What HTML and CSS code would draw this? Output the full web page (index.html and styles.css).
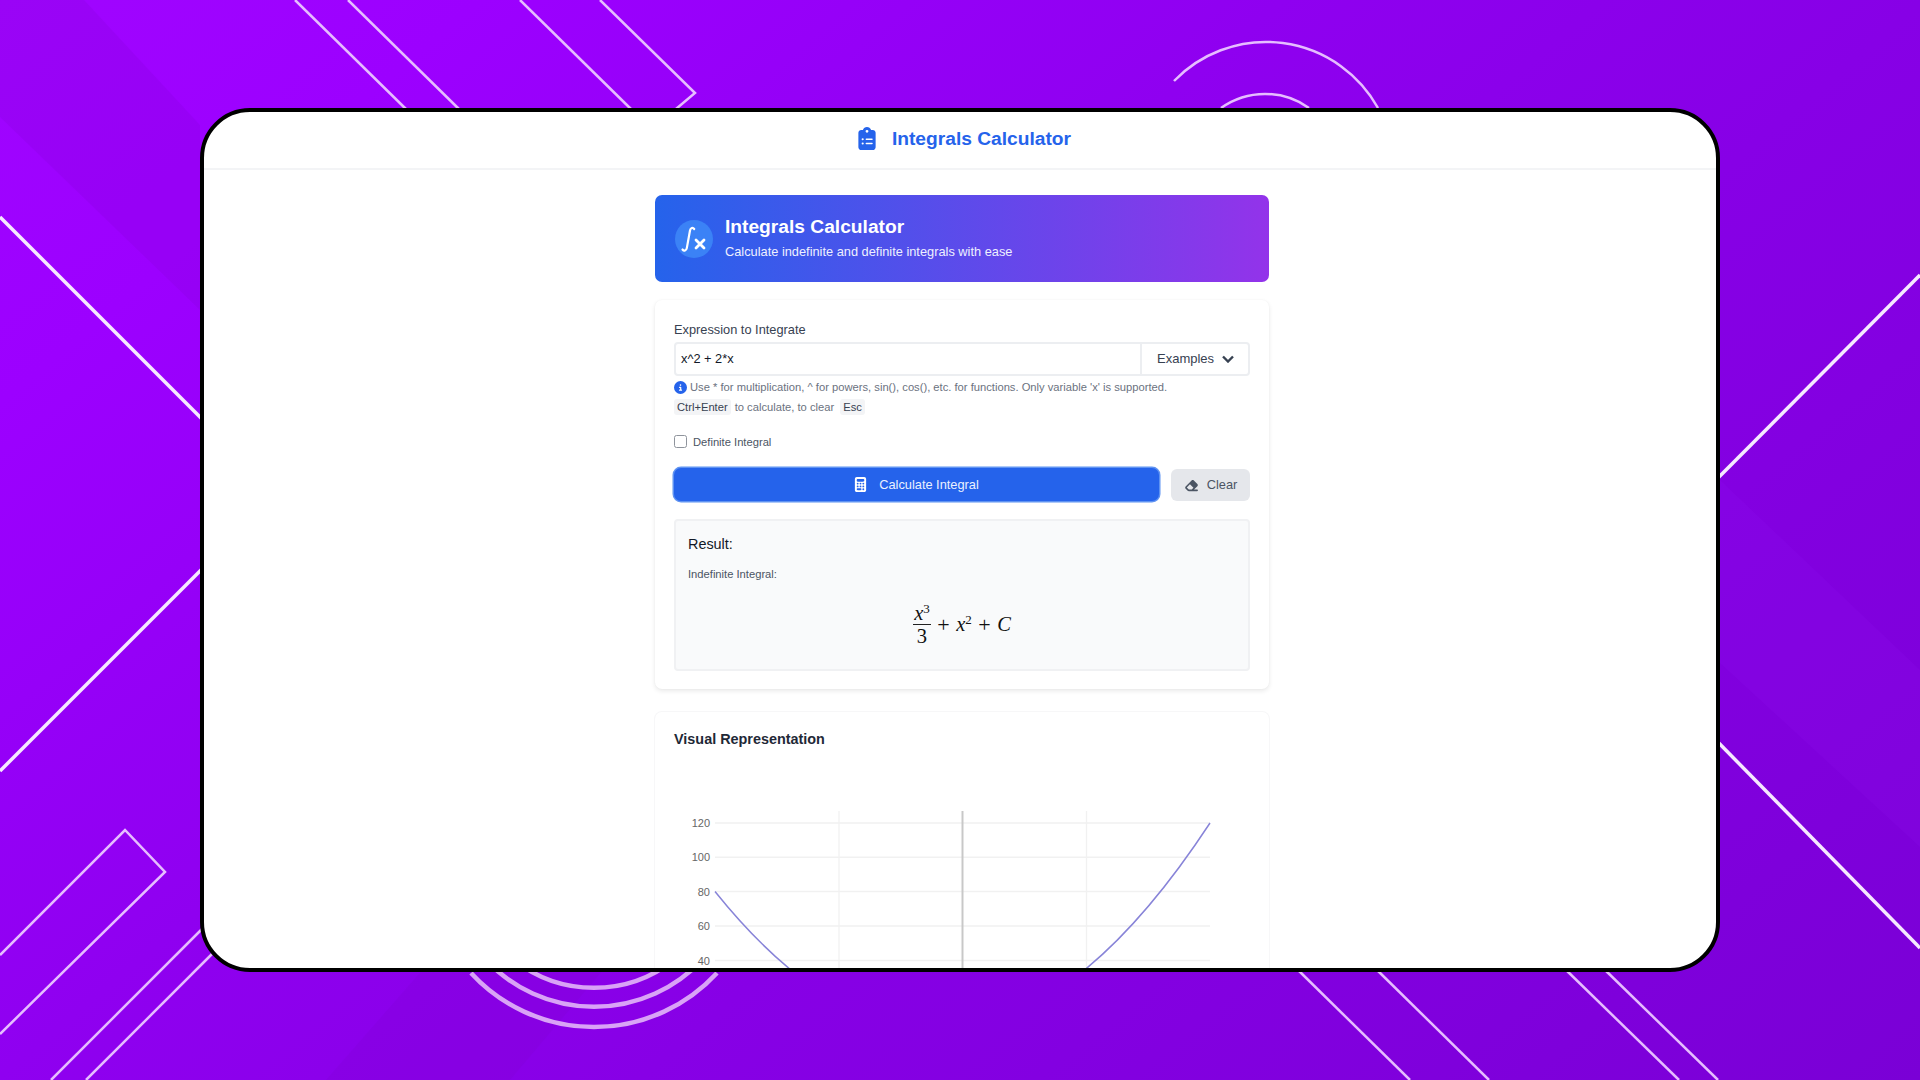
FILE: index.html
```html
<!DOCTYPE html>
<html lang="en">
<head>
<meta charset="utf-8">
<title>Integrals Calculator</title>
<link rel="stylesheet" href="styles.css">
</head>
<body>
<div class="stage">
  <svg class="backdrop" viewBox="0 0 1920 1080" aria-hidden="true">
    <g class="facets">
      <polygon class="dark" points="84,0 200,125 200,310 0,117 0,0"/>
      <polygon class="dark" points="326,1080 440,950 620,950 510,1080"/>
      <polygon class="light" points="1720,480 1920,670 1920,847 1720,663"/>
    </g>
    <g class="line-heavy">
      <line x1="0" y1="217" x2="210" y2="427"/>
      <line x1="0" y1="771" x2="210" y2="561"/>
      <line x1="1920" y1="275" x2="1710" y2="486"/>
      <line x1="1710" y1="734" x2="1920" y2="948"/>
    </g>
    <g class="line-thin">
      <line x1="295" y1="0" x2="410" y2="113"/>
      <line x1="348" y1="0" x2="463" y2="113"/>
      <line x1="520" y1="0" x2="635" y2="113"/>
      <polyline points="600,0 695,93 670,114"/>
      <polyline points="0,955 125,830 165,872 0,1034"/>
      <line x1="205" y1="926" x2="51" y2="1080"/>
      <line x1="220" y1="946" x2="86" y2="1080"/>
      <line x1="1295" y1="967" x2="1410" y2="1080"/>
      <line x1="1374" y1="967" x2="1489" y2="1080"/>
      <line x1="1563" y1="967" x2="1679" y2="1080"/>
      <line x1="1602" y1="967" x2="1718" y2="1080"/>
      <path d="M1174 81A128 128 0 0 1 1378 108"/>
      <path d="M1221 108A76 76 0 0 1 1309 108"/>
    </g>
    <g class="arcs">
      <path d="M471 973A167 167 0 0 0 717 973"/>
      <path d="M486 960A148 148 0 0 0 702 960"/>
      <path d="M514 960A129 129 0 0 0 674 960"/>
    </g>
  </svg>

  <div class="window">
    <header class="topbar">
      <svg class="logo" viewBox="0 0 384 512" aria-hidden="true"><path d="M192 0c-41.800 0-77.400 26.700-90.500 64H64C28.700 64 0 92.700 0 128V448c0 35.300 28.700 64 64 64H320c35.300 0 64-28.700 64-64V128c0-35.300-28.700-64-64-64H282.500C269.400 26.700 233.800 0 192 0zm0 64a32 32 0 1 1 0 64 32 32 0 1 1 0-64zM72 272a24 24 0 1 1 48 0 24 24 0 1 1 -48 0zm104-16H304c8.800 0 16 7.200 16 16s-7.200 16-16 16H176c-8.800 0-16-7.200-16-16s7.200-16 16-16zM72 368a24 24 0 1 1 48 0 24 24 0 1 1 -48 0zm88 0c0-8.800 7.200-16 16-16H304c8.800 0 16 7.200 16 16s-7.200 16-16 16H176c-8.800 0-16-7.200-16-16z"/></svg>
      <span class="brand">Integrals Calculator</span>
    </header>

    <main class="column">
      <section class="banner">
        <span class="banner-badge">
          <svg viewBox="0 0 38 38" aria-hidden="true">
            <path class="integral" d="M7.500 29.500c1.600 2 3.800 1.200 4.300-1.400L15 10.500c.5-2.700 2.800-3.400 4.200-1.500"/>
            <path class="times" d="M21 20l8 8M29 20l-8 8"/>
          </svg>
        </span>
        <div class="banner-text">
          <h1 class="banner-title">Integrals Calculator</h1>
          <p class="banner-sub">Calculate indefinite and definite integrals with ease</p>
        </div>
      </section>

      <section class="card calc-card">
        <label class="field-label">Expression to Integrate</label>
        <div class="input-group">
          <span class="expr">x^2 + 2*x</span>
          <span class="examples">Examples
            <svg class="chevron" viewBox="0 0 12 8" aria-hidden="true"><path d="M1 1.500l5 5 5-5"/></svg>
          </span>
        </div>
        <p class="hint hint-first">
          <svg class="info" viewBox="0 0 512 512" aria-hidden="true"><path d="M256 512A256 256 0 1 0 256 0a256 256 0 1 0 0 512zM216 336h24V272H216c-13.300 0-24-10.700-24-24s10.700-24 24-24h48c13.300 0 24 10.700 24 24v88h8c13.300 0 24 10.700 24 24s-10.700 24-24 24H216c-13.300 0-24-10.700-24-24s10.700-24 24-24zm40-208a32 32 0 1 1 0 64 32 32 0 1 1 0-64z"/></svg>
          Use * for multiplication, ^ for powers, sin(), cos(), etc. for functions. Only variable 'x' is supported.
        </p>
        <p class="hint hint-second"><kbd>Ctrl+Enter</kbd> to calculate, to clear <kbd class="kbd-esc">Esc</kbd></p>
        <label class="check-row"><span class="checkbox"></span>Definite Integral</label>
        <div class="actions">
          <button class="btn-primary" type="button">
            <svg class="btn-icon" viewBox="0 0 384 512" aria-hidden="true"><path d="M64 0C28.700 0 0 28.700 0 64V448c0 35.300 28.700 64 64 64H320c35.300 0 64-28.700 64-64V64c0-35.300-28.700-64-64-64H64zM96 64H288c17.700 0 32 14.300 32 32v32c0 17.700-14.300 32-32 32H96c-17.700 0-32-14.300-32-32V96c0-17.700 14.300-32 32-32zm32 160a32 32 0 1 1 -64 0 32 32 0 1 1 64 0zM96 352a32 32 0 1 1 0-64 32 32 0 1 1 0 64zM64 416c0-17.700 14.300-32 32-32h96c17.700 0 32 14.300 32 32s-14.300 32-32 32H96c-17.700 0-32-14.300-32-32zM192 256a32 32 0 1 1 0-64 32 32 0 1 1 0 64zm32 64a32 32 0 1 1 -64 0 32 32 0 1 1 64 0zm64-64a32 32 0 1 1 0-64 32 32 0 1 1 0 64zm32 64a32 32 0 1 1 -64 0 32 32 0 1 1 64 0zm0 96a32 32 0 1 1 -64 0 32 32 0 1 1 64 0z"/></svg>
            Calculate Integral
          </button>
          <button class="btn-clear" type="button">
            <svg class="eraser" viewBox="0 0 576 512" aria-hidden="true"><path d="M290.700 57.400L57.400 290.700c-25 25-25 65.500 0 90.500l80 80c12 12 28.300 18.700 45.300 18.700H288h9.400H512c17.700 0 32-14.300 32-32s-14.300-32-32-32H387.900L518.600 285.300c25-25 25-65.500 0-90.500L381.300 57.400c-25-25-65.500-25-90.500 0zM297.400 416H288l-105.400 0-80-80L227.300 211.300 364.700 348.700 297.400 416z"/></svg>
            Clear
          </button>
        </div>
        <div class="result">
          <h2 class="result-title">Result:</h2>
          <p class="result-kind">Indefinite Integral:</p>
          <div class="formula">
            <span class="frac">
              <span class="num"><i>x</i><sup>3</sup></span>
              <span class="den">3</span>
            </span>
            <span class="op">+</span>
            <span class="term"><i>x</i><sup>2</sup></span>
            <span class="op">+</span>
            <i class="term">C</i>
          </div>
        </div>
      </section>

      <section class="card chart-card">
        <h2 class="chart-title">Visual Representation</h2>
        <svg class="chart" viewBox="0 0 576 168" aria-label="Plot of the integrand">
          <g class="grid">
            <line x1="41" y1="23" x2="536" y2="23"/>
            <line x1="41" y1="57.250" x2="536" y2="57.250"/>
            <line x1="41" y1="91.500" x2="536" y2="91.500"/>
            <line x1="41" y1="126" x2="536" y2="126"/>
            <line x1="41" y1="160.500" x2="536" y2="160.500"/>
            <line x1="165" y1="11" x2="165" y2="168"/>
            <line x1="412.500" y1="11" x2="412.500" y2="168"/>
          </g>
          <line class="axis" x1="288.500" y1="11" x2="288.500" y2="168"/>
          <g class="ticks">
            <text x="36" y="27">120</text>
            <text x="36" y="61">100</text>
            <text x="36" y="95.500">80</text>
            <text x="36" y="130">60</text>
            <text x="36" y="164.500">40</text>
          </g>
          <path class="curve" d="M41 91.500Q90.500 153.150 140 187.400M387.500 187.400Q461.750 136.030 536 23"/>
        </svg>
      </section>
    </main>
  </div>
</div>
</body>
</html>
```

FILE: styles.css
```css
* { box-sizing: border-box; }
html, body { margin: 0; padding: 0; }
body { font-family: "Liberation Sans", Arial, sans-serif; color: #1f2937; }

.stage {
  position: relative;
  width: 1920px;
  height: 1080px;
  overflow: hidden;
  padding: 108px 200px;
  background: linear-gradient(140deg, #a005ff 0%, #9c00ff 15%, #8f00f0 40%, #8700e6 60%, #7a00d6 100%);
}
.backdrop { position: absolute; inset: 0; width: 1920px; height: 1080px; }
.facets .dark { fill: #7a00c8; opacity: .16; }
.facets .light { fill: #a020ff; opacity: .1; }
.line-heavy line { stroke: #f6e9ff; stroke-width: 3.500; fill: none; }
.line-thin line, .line-thin polyline, .line-thin path { stroke: #e6bdff; stroke-width: 2.500; fill: none; }
.arcs path { stroke: #d9a3f6; stroke-width: 4.500; fill: none; }

.window {
  position: relative;
  height: 864px;
  background: #fff;
  border: 4px solid #000;
  border-radius: 50px;
  overflow: hidden;
}

.topbar {
  height: 58px;
  border-bottom: 2px solid #f3f4f6;
  display: flex;
  align-items: center;
  justify-content: center;
  gap: 16px;
  padding: 0 0 3px 9px;
}
.logo { width: 18px; height: 23px; fill: #2563eb; }
.brand { font-size: 19.200px; font-weight: 700; color: #2563eb; }

.column { width: 614px; margin: 25px 0 0 451px; }

.banner {
  height: 87px;
  border-radius: 7px;
  background: linear-gradient(90deg, #2563eb, #9333ea);
  display: flex;
  align-items: center;
  gap: 12px;
  padding: 0 20px;
  color: #fff;
}
.banner-badge {
  width: 38px;
  height: 38px;
  border-radius: 50%;
  background: #3b82f6;
  flex: none;
}
.banner-badge svg { display: block; width: 38px; height: 38px; fill: none; stroke: #fff; stroke-linecap: round; }
.integral { stroke-width: 2.200; }
.times { stroke-width: 2.800; }
.banner-text { padding-bottom: 1px; }
.banner-title { margin: 0; font-size: 19.200px; line-height: 24px; font-weight: 700; }
.banner-sub { margin: 4.500px 0 0; font-size: 12.800px; line-height: 18px; color: #eef0ff; }

.card {
  background: #fff;
  border-radius: 7px;
  box-shadow: 0 0 0 1px #f7f7f8;
  padding: 0 19px;
}
.calc-card {
  margin-top: 18px;
  height: 389px;
  padding-top: 22px;
  box-shadow: 0 2px 5px rgba(0,0,0,.09), 0 0 2px rgba(0,0,0,.04);
}
.field-label { display: block; font-size: 12.800px; line-height: 16px; color: #374151; }
.input-group {
  margin-top: 4px;
  height: 34px;
  border: 2px solid #eceef1;
  border-radius: 4px;
  display: flex;
  align-items: center;
  font-size: 12.800px;
}
.expr { flex: 1; padding: 0 0 1px 5px; color: #111827; }
.examples {
  width: 108px;
  height: 100%;
  border-left: 2px solid #eceef1;
  display: flex;
  align-items: center;
  gap: 8px;
  padding: 0 0 1px 15px;
  font-size: 13px;
  color: #374151;
}
.chevron { width: 12px; height: 8px; fill: none; stroke: #374151; stroke-width: 2.400; }

.hint { margin: 0; font-size: 11.200px; color: #6b7280; display: flex; align-items: center; gap: 4px; }
.hint-first { margin-top: 4px; height: 14px; gap: 3px; }
.hint-second { margin-top: 5px; height: 16px; color: #6b7280; }
.info { width: 13px; height: 13px; fill: #2563eb; flex: none; }
kbd {
  font-family: inherit;
  font-size: 11.200px;
  line-height: 16px;
  background: #f3f4f6;
  color: #374151;
  border-radius: 3px;
  padding: 0 3px;
}
.kbd-esc { margin-left: 2px; }

.check-row {
  display: flex;
  align-items: center;
  gap: 6px;
  height: 14px;
  margin-top: 19.500px;
  font-size: 11.200px;
  color: #4b5563;
}
.checkbox {
  width: 13px;
  height: 13px;
  border: 1.500px solid #8f949c;
  border-radius: 2.500px;
  background: #fff;
}

.actions { display: flex; align-items: center; gap: 12px; margin-top: 19.500px; height: 33px; }
.btn-primary {
  flex: none;
  width: 485px;
  height: 33px;
  border: 0;
  border-radius: 7px;
  background: #2563eb;
  box-shadow: 0 0 0 1.500px #5f93f2;
  color: #eaf1ff;
  font: 12.800px "Liberation Sans", Arial, sans-serif;
  display: flex;
  align-items: center;
  justify-content: center;
  gap: 12px;
  padding: 0;
}
.btn-icon { width: 13px; height: 15px; fill: #fff; }
.btn-clear {
  flex: none;
  width: 79px;
  height: 32px;
  border: 0;
  border-radius: 6px;
  background: #e5e7eb;
  color: #4b5563;
  font: 12.800px "Liberation Sans", Arial, sans-serif;
  display: flex;
  align-items: center;
  justify-content: center;
  gap: 8px;
}
.eraser { width: 15px; height: 13px; fill: #4b5563; margin-top: 1px; }

.result {
  margin-top: 18px;
  height: 152px;
  background: #f9fafb;
  border: 2px solid #f0f1f3;
  border-radius: 4px;
  padding: 14px 12px 0;
}
.result-title { margin: 0; font-size: 14.400px; line-height: 18px; font-weight: 400; color: #111827; }
.result-kind { margin: 14px 0 0; font-size: 11.200px; line-height: 14px; color: #4b5563; }
.formula {
  margin-top: 23px;
  display: flex;
  justify-content: center;
  align-items: center;
  gap: 6.500px;
  font-family: "Liberation Serif", "Times New Roman", serif;
  font-size: 20.500px;
  color: #111;
}
.frac { display: inline-flex; flex-direction: column; align-items: center; }
.num { border-bottom: 1px solid #222; padding: 0 1px 2px; line-height: 18px; }
.den { padding-top: 2px; line-height: 18px; }
.formula sup { font-size: 13px; line-height: 0; vertical-align: 7px; font-style: normal; }
.op { font-size: 22px; }
.term { line-height: 1; }

.chart-card { margin-top: 23px; height: 400px; padding-top: 18px; }
.chart-title { margin: 0; font-size: 14.400px; line-height: 18px; font-weight: 700; color: #1f2937; }
.chart { display: block; width: 576px; height: 168px; margin-top: 52px; overflow: hidden; }
.grid line { stroke: #f1f1f1; stroke-width: 1.300; }
.axis { stroke: #c8c8c8; stroke-width: 2; }
.ticks text { font-size: 11px; fill: #666; text-anchor: end; font-family: "Liberation Sans", Arial, sans-serif; }
.curve { fill: none; stroke: #8884d8; stroke-width: 1.500; }
```
